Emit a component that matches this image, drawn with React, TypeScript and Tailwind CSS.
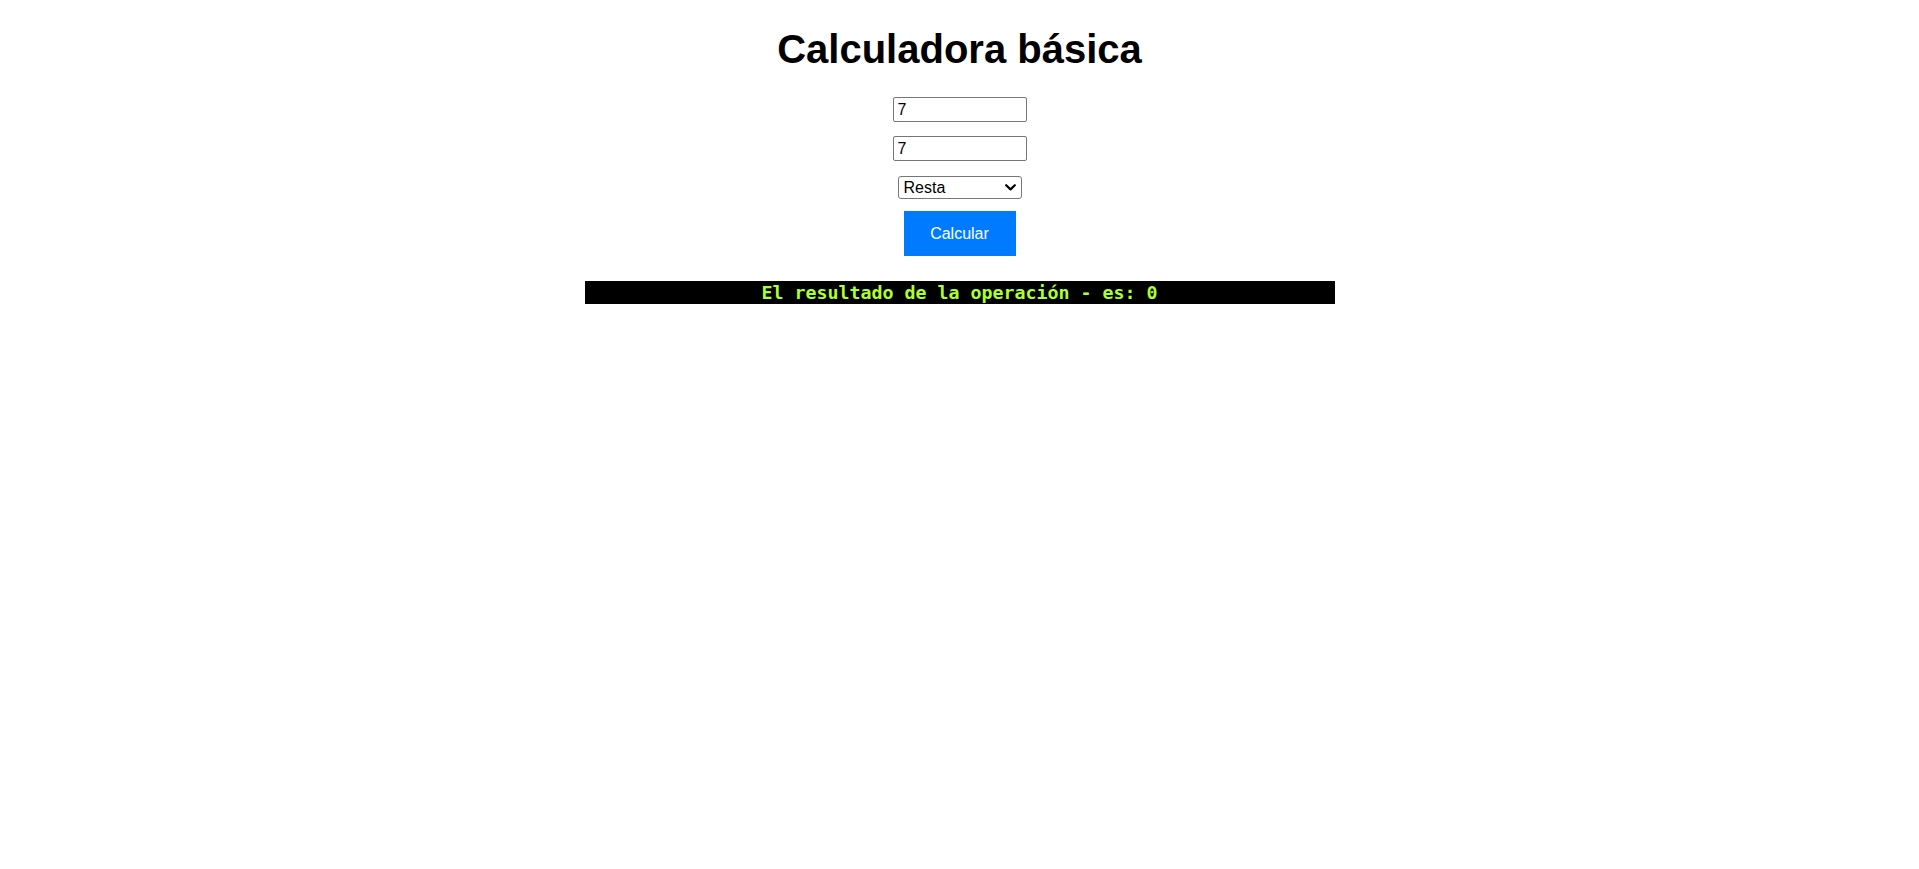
import React from "react";

export default function App() {
  return (
    <div className="flex min-h-screen w-full flex-col items-center bg-white font-['Liberation_Sans',Arial,sans-serif] text-black">
      <h1 className="pt-[26px] text-[40px] font-bold leading-[46px]">Calculadora básica</h1>
      <input
        type="text"
        defaultValue="7"
        className="mt-[25px] box-border h-[25px] w-[134px] rounded-[2px] border border-[#767676] px-[4px] text-[16px] leading-[23px] text-black outline-none"
      />
      <input
        type="text"
        defaultValue="7"
        className="mt-[14px] box-border h-[25px] w-[134px] rounded-[2px] border border-[#767676] px-[4px] text-[16px] leading-[23px] text-black outline-none"
      />
      <div className="relative mt-[15px] h-[23px] w-[124px]">
        <select
          defaultValue="resta"
          className="box-border h-[23px] w-[124px] appearance-none rounded-[3px] border border-[#767676] bg-white pl-[5px] text-[16px] leading-[21px] text-black outline-none"
        >
          <option value="suma">Suma</option>
          <option value="resta">Resta</option>
          <option value="multiplicacion">Multiplicación</option>
          <option value="division">División</option>
        </select>
        <svg
          className="pointer-events-none absolute right-[6px] top-[8px]"
          width="11"
          height="7"
          viewBox="0 0 11 7"
        >
          <path d="M1.2 1.2 L5.5 5.4 L9.8 1.2" fill="none" stroke="#000" strokeWidth="2.2" strokeLinecap="round" strokeLinejoin="round" />
        </svg>
      </div>
      <button className="mt-[12px] h-[45px] w-[112px] bg-[#007bff] text-[16px] text-white">Calcular</button>
      <div className="mt-[25px] flex h-[23px] w-[750px] items-center justify-center bg-black font-['DejaVu_Sans_Mono',monospace] text-[18.3px] font-bold leading-[23px] text-[#adff2f]">
        El resultado de la operación - es: 0
      </div>
    </div>
  );
}
